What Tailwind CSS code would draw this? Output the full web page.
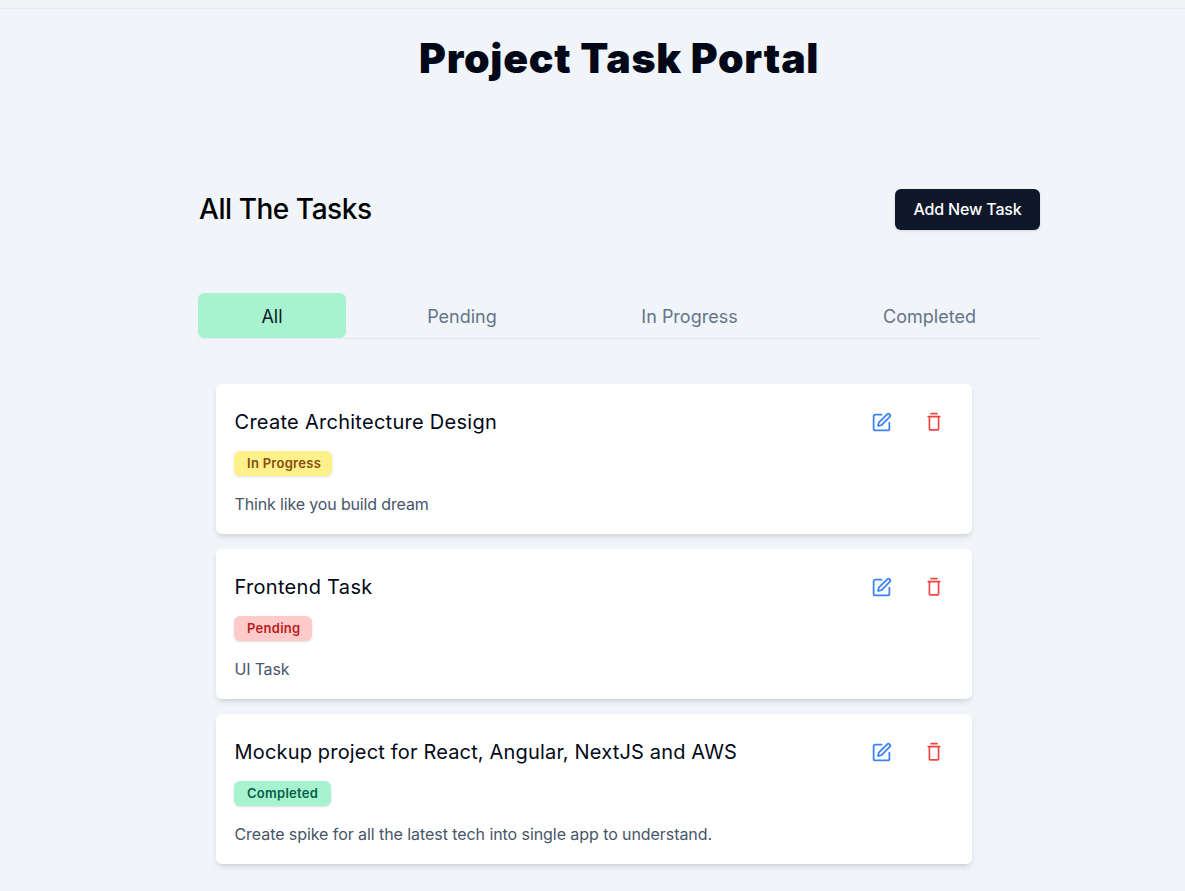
<!DOCTYPE html>
<html lang="en">
<head>
    <meta charset="UTF-8">
    <title>Project Task Portal</title>
    <script src="https://cdn.jsdelivr.net/npm/@tailwindcss/browser@4"></script>
</head>
<body class="bg-[#f1f5f9] font-['Inter',sans-serif] text-[#020817] h-[891px] overflow-hidden">
    <header class="h-[9px] bg-[#f3f4f6] border-b border-[#e8ecf1]"></header>
    <h1 class="mt-[24px] pl-[419px] text-[41px] leading-[50px] font-black tracking-[0.75px] w-[1000px]">Project Task Portal</h1>

    <main class="ml-[198px] w-[842px]">
        <div class="mt-[106px] flex items-center justify-between h-[41px]">
            <h2 class="ml-px pb-[2px] text-[28px] leading-[38px] font-medium tracking-[-0.45px] text-black">All The Tasks</h2>
            <button class="h-[41px] w-[145px] pb-[2px] bg-[#0f172a] text-white rounded-md text-base font-medium tracking-[-0.15px] shadow-sm">Add New Task</button>
        </div>

        <div class="mt-[63px] flex h-[46px] border-b border-[#e2e8f0] text-lg text-[#64748b]">
            <button class="w-[148px] shrink-0 h-[45px] pt-[2px] bg-[#a7f3d0] rounded-md text-[#0f172a]">All</button>
            <button class="w-[232px] shrink-0 h-[45px] pt-[2px]">Pending</button>
            <button class="w-[223px] shrink-0 h-[45px] pt-[2px]">In Progress</button>
            <button class="w-[239px] shrink-0 h-[45px] pt-[2px] pl-[18px]">Completed</button>
        </div>

        <ul class="mt-[45px] ml-[18px] w-[756px] flex flex-col gap-[15px]">
            <li class="h-[150px] bg-white rounded-md shadow-md pl-[18.5px] pr-[19px] pt-[22px]">
                <div class="flex justify-between">
                    <h3 class="text-xl leading-[32px] tracking-[0.27px]">Create Architecture Design</h3>
                    <div class="flex gap-[32.5px] mr-[9px] items-center text-[#3b82f6]">
                        <svg class="w-[21px] h-[21px] mt-px" viewBox="0 0 24 24" fill="none" stroke="currentColor" stroke-width="2" stroke-linecap="round" stroke-linejoin="round"><path d="M12 3H5a2 2 0 0 0-2 2v14a2 2 0 0 0 2 2h14a2 2 0 0 0 2-2v-7"/><path d="M18.375 2.625a1 1 0 0 1 3 3l-9.013 9.014a2 2 0 0 1-.853.505l-2.873.84a.5.5 0 0 1-.62-.62l.84-2.873a2 2 0 0 1 .506-.852z"/></svg>
                        <svg class="w-5 h-5 text-[#ef4444]" viewBox="0 0 24 24" fill="none" stroke="currentColor" stroke-width="2" stroke-linecap="round" stroke-linejoin="round"><path d="M8.5 2h7"/><path d="M5 5.5h14"/><path d="M6.5 5.5v15a1 1 0 0 0 1 1h9a1 1 0 0 0 1-1v-15"/></svg>
                    </div>
                </div>
                <span class="inline-block -ml-[0.5px] mt-[13px] h-[25px] pl-[13px] pr-[11px] rounded-md bg-[#fef08a] text-[#854d0e] text-[13px] leading-[25px] font-semibold tracking-[0.28px] shadow-sm align-top">In Progress</span>
                <p class="mt-[16px] text-base leading-[24px] tracking-[-0.15px] text-[#475569]">Think like you build dream</p>
            </li>
            <li class="h-[150px] bg-white rounded-md shadow-md pl-[18.5px] pr-[19px] pt-[22px]">
                <div class="flex justify-between">
                    <h3 class="text-xl leading-[32px] tracking-[0.3px]">Frontend Task</h3>
                    <div class="flex gap-[32.5px] mr-[9px] items-center text-[#3b82f6]">
                        <svg class="w-[21px] h-[21px] mt-px" viewBox="0 0 24 24" fill="none" stroke="currentColor" stroke-width="2" stroke-linecap="round" stroke-linejoin="round"><path d="M12 3H5a2 2 0 0 0-2 2v14a2 2 0 0 0 2 2h14a2 2 0 0 0 2-2v-7"/><path d="M18.375 2.625a1 1 0 0 1 3 3l-9.013 9.014a2 2 0 0 1-.853.505l-2.873.84a.5.5 0 0 1-.62-.62l.84-2.873a2 2 0 0 1 .506-.852z"/></svg>
                        <svg class="w-5 h-5 text-[#ef4444]" viewBox="0 0 24 24" fill="none" stroke="currentColor" stroke-width="2" stroke-linecap="round" stroke-linejoin="round"><path d="M8.5 2h7"/><path d="M5 5.5h14"/><path d="M6.5 5.5v15a1 1 0 0 0 1 1h9a1 1 0 0 0 1-1v-15"/></svg>
                    </div>
                </div>
                <span class="inline-block -ml-[0.5px] mt-[13px] h-[25px] pl-[13px] pr-[11px] rounded-md bg-[#fecaca] text-[#b91c1c] text-[13px] leading-[25px] font-semibold tracking-[0.28px] shadow-sm align-top">Pending</span>
                <p class="mt-[16px] text-base leading-[24px] tracking-[-0.19px] text-[#475569]">UI Task</p>
            </li>
            <li class="h-[150px] bg-white rounded-md shadow-md pl-[18.5px] pr-[19px] pt-[22px]">
                <div class="flex justify-between">
                    <h3 class="text-xl leading-[32px] tracking-[0.17px]">Mockup project for React, Angular, NextJS and AWS</h3>
                    <div class="flex gap-[32.5px] mr-[9px] items-center text-[#3b82f6]">
                        <svg class="w-[21px] h-[21px] mt-px" viewBox="0 0 24 24" fill="none" stroke="currentColor" stroke-width="2" stroke-linecap="round" stroke-linejoin="round"><path d="M12 3H5a2 2 0 0 0-2 2v14a2 2 0 0 0 2 2h14a2 2 0 0 0 2-2v-7"/><path d="M18.375 2.625a1 1 0 0 1 3 3l-9.013 9.014a2 2 0 0 1-.853.505l-2.873.84a.5.5 0 0 1-.62-.62l.84-2.873a2 2 0 0 1 .506-.852z"/></svg>
                        <svg class="w-5 h-5 text-[#ef4444]" viewBox="0 0 24 24" fill="none" stroke="currentColor" stroke-width="2" stroke-linecap="round" stroke-linejoin="round"><path d="M8.5 2h7"/><path d="M5 5.5h14"/><path d="M6.5 5.5v15a1 1 0 0 0 1 1h9a1 1 0 0 0 1-1v-15"/></svg>
                    </div>
                </div>
                <span class="inline-block -ml-[0.5px] mt-[13px] h-[25px] pl-[13px] pr-[13px] rounded-md bg-[#a7f3d0] text-[#065f46] text-[13px] leading-[25px] font-semibold tracking-[0.28px] shadow-sm align-top">Completed</span>
                <p class="mt-[16px] text-base leading-[24px] tracking-[-0.07px] text-[#475569]">Create spike for all the latest tech into single app to understand.</p>
            </li>
        </ul>
    </main>
</body>
</html>
